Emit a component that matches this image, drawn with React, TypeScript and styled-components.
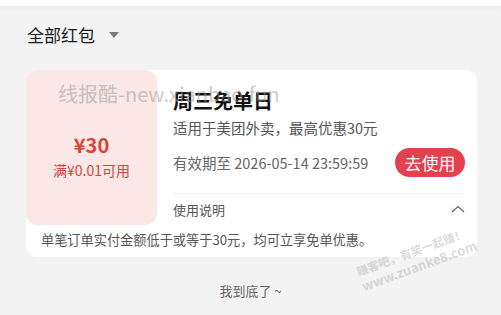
import * as React from 'react';
import styled, { createGlobalStyle } from 'styled-components';

const GlobalStyle = createGlobalStyle`
  html, body {
    margin: 0;
    padding: 0;
    background: #f3f3f3;
    font-family: "Noto Sans CJK SC", "Noto Sans", sans-serif;
  }
`;

const Page = styled.div`
  position: relative;
  width: 501px;
  height: 315px;
  overflow: hidden;
  background: #f3f3f3;
`;

const TopBar = styled.div`
  height: 6px;
  background: #fff;
  box-shadow: 0 1px 5px rgba(0, 0, 0, 0.08);
`;

const Header = styled.div`
  display: flex;
  align-items: center;
  gap: 14px;
  height: 56px;
  padding-left: 27px;
  font-size: 17px;
  color: #1a1a1a;
`;

const Triangle = styled.span`
  width: 0;
  height: 0;
  border-left: 5px solid transparent;
  border-right: 5px solid transparent;
  border-top: 6px solid #7a7a7a;
  margin-top: 2px;
`;

const Card = styled.div`
  position: relative;
  margin: 8px 24px 0 26px;
  background: #fff;
  border-radius: 12px;
`;

const TopRow = styled.div`
  display: flex;
`;

const Amount = styled.div`
  display: flex;
  flex-direction: column;
  align-items: center;
  width: 131px;
  height: 155px;
  padding-top: 64px;
  box-sizing: border-box;
  background: #fbe7e5;
  border-radius: 12px;
  color: #d4463c;
`;

const Price = styled.div`
  font-size: 20px;
  font-weight: 700;
  line-height: 22px;
`;

const Condition = styled.div`
  margin-top: 5px;
  font-size: 14px;
  line-height: 18px;
`;

const Info = styled.div`
  flex: 1;
  display: flex;
  flex-direction: column;
  padding: 18px 12px 0 16px;
`;

const Title = styled.div`
  font-size: 20px;
  font-weight: 700;
  line-height: 26px;
  color: #111;
`;

const Sub = styled.div`
  margin-top: 4px;
  font-size: 14.5px;
  line-height: 20px;
  color: #555;
`;

const ValidRow = styled.div`
  display: flex;
  align-items: center;
  justify-content: space-between;
  margin-top: 10px;
  font-size: 14.5px;
  color: #666;
`;

const UseButton = styled.button`
  width: 70px;
  height: 29px;
  border: none;
  border-radius: 15px;
  padding: 0;
  background: #e4404e;
  color: #fff;
  font-family: inherit;
  font-size: 17px;
  line-height: 29px;
`;

const Divider = styled.div`
  margin-top: 16px;
  height: 1px;
  background: #efefef;
`;

const UsageRow = styled.div`
  display: flex;
  align-items: center;
  justify-content: space-between;
  height: 30px;
  font-size: 13px;
  color: #555;
`;

const Desc = styled.div`
  padding: 5px 15px 7px;
  font-size: 13.2px;
  line-height: 20px;
  color: #555;
`;

const Footer = styled.div`
  margin-top: 24px;
  text-align: center;
  font-size: 13px;
  line-height: 20px;
  color: #666;
`;

const SiteMark = styled.div`
  position: absolute;
  left: 32px;
  top: 12px;
  font-size: 20px;
  line-height: 24px;
  color: rgba(150, 150, 150, 0.5);
  pointer-events: none;
  white-space: nowrap;
`;

const StampMark = styled.div`
  position: absolute;
  left: 354px;
  top: 264px;
  transform: rotate(-20deg);
  transform-origin: left top;
  color: rgba(175, 175, 175, 0.45);
  font-weight: 700;
  line-height: 16px;
  pointer-events: none;
  white-space: nowrap;
`;

const StampLine = styled.div<{ size: number }>`
  font-size: ${(p) => p.size}px;
`;

const ChevronUp = () => (
  <svg width="14" height="8" viewBox="0 0 14 8" fill="none">
    <path d="M1 7L7 1.5L13 7" stroke="#666" strokeWidth="1.2" />
  </svg>
);

const App = () => {
  return (
    <Page>
      <GlobalStyle />
      <TopBar />
      <Header>
        全部红包
        <Triangle />
      </Header>
      <Card>
        <TopRow>
          <Amount>
            <Price>¥30</Price>
            <Condition>满¥0.01可用</Condition>
          </Amount>
          <Info>
            <Title>周三免单日</Title>
            <Sub>适用于美团外卖，最高优惠30元</Sub>
            <ValidRow>
              有效期至 2026-05-14 23:59:59
              <UseButton>去使用</UseButton>
            </ValidRow>
            <Divider />
            <UsageRow>
              使用说明
              <ChevronUp />
            </UsageRow>
          </Info>
        </TopRow>
        <Desc>单笔订单实付金额低于或等于30元，均可立享免单优惠。</Desc>
        <SiteMark>线报酷-new.xianbao.fun</SiteMark>
      </Card>
      <Footer>我到底了 ~</Footer>
      <StampMark>
        <StampLine size={11.5}>赚客吧，有奖一起赚！</StampLine>
        <StampLine size={13}>www.zuanke8.com</StampLine>
      </StampMark>
    </Page>
  );
};

export default App;
